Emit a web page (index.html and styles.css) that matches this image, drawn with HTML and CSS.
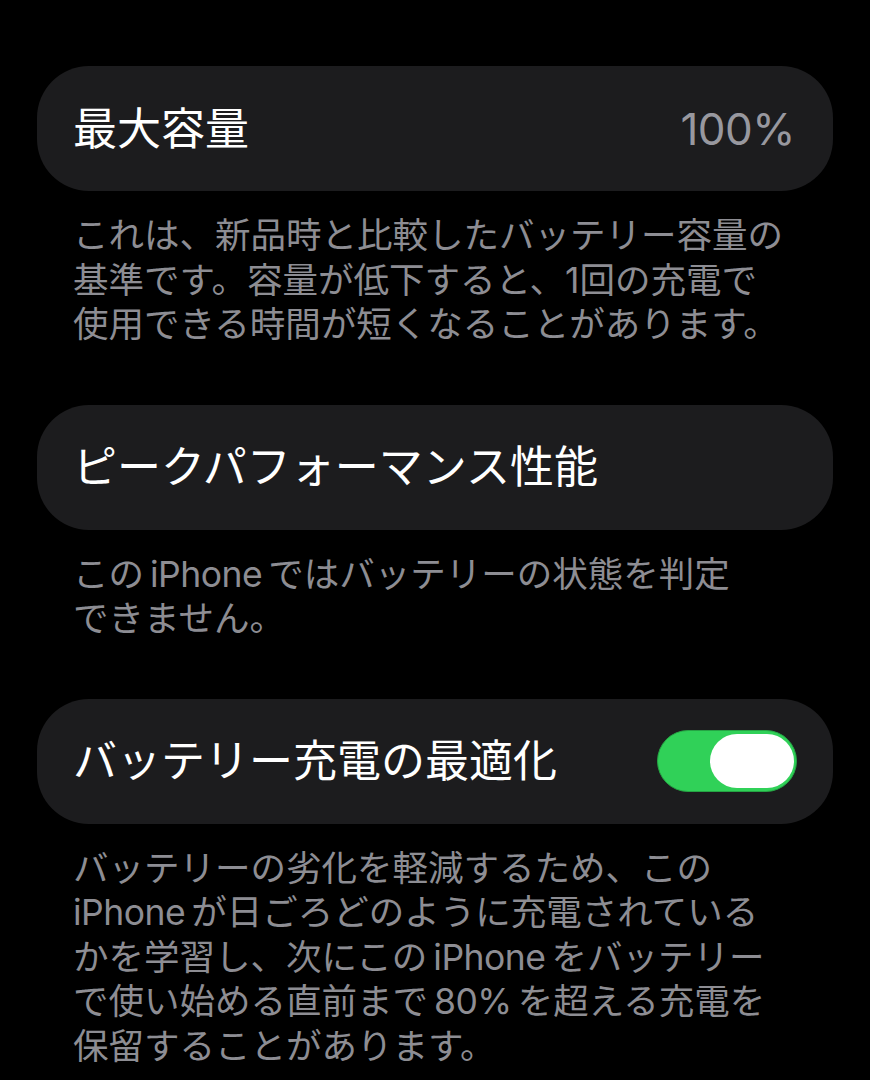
FILE: index.html
```html
<!DOCTYPE html>
<html lang="ja">
<head>
<meta charset="utf-8">
<link rel="stylesheet" href="styles.css">
</head>
<body>
<main class="screen">
  <section class="group">
    <div class="card">
      <span class="title">最大容量</span>
      <span class="value">100%</span>
    </div>
    <p class="desc">これは、新品時と比較したバッテリー容量の<br>基準です。容量が低下すると、1回の充電で<br>使用できる時間が短くなることがあります。</p>
  </section>
  <section class="group">
    <div class="card">
      <span class="title">ピークパフォーマンス性能</span>
    </div>
    <p class="desc">この<span class="lat both">iPhone</span>ではバッテリーの状態を判定<br>できません。</p>
  </section>
  <section class="group">
    <div class="card">
      <span class="title">バッテリー充電の最適化</span>
      <span class="toggle on"><span class="knob"></span></span>
    </div>
    <p class="desc">バッテリーの劣化を軽減するため、この<br><span class="lat right">iPhone</span>が日ごろどのように充電されている<br>かを学習し、次にこの<span class="lat both">iPhone</span>をバッテリー<br>で使い始める直前まで<span class="lat both">80%</span>を超える充電を<br>保留することがあります。</p>
  </section>
</main>
</body>
</html>
```

FILE: styles.css
```css
html, body {
  margin: 0;
  padding: 0;
  background: #000;
}

body {
  width: 870px;
  height: 1080px;
  overflow: hidden;
  font-family: "Inter", "Noto Sans CJK JP", sans-serif;
  color: #fff;
}

.screen {
  padding: 66px 37px 0 37px;
  display: flex;
  flex-direction: column;
  gap: 57px;
}

.group {
  display: flex;
  flex-direction: column;
}

.card {
  height: 125px;
  box-sizing: border-box;
  background: #1c1c1e;
  border-radius: 52px;
  padding: 0 36px 0 36px;
  display: flex;
  align-items: center;
  justify-content: space-between;
}

.title {
  font-size: 44px;
  line-height: 1;
  color: #fff;
  font-weight: 400;
}

.value {
  font-size: 44px;
  line-height: 1;
  color: #98989f;
  font-weight: 400;
  margin-right: 2px;
  letter-spacing: -0.5px;
}

.desc {
  margin: 23px 0 0 0;
  padding: 0 36px;
  font-size: 35.5px;
  line-height: 44.5px;
  color: #8d8d93;
  font-weight: 400;
}

.lat {
  letter-spacing: -0.5px;
}

.lat.both {
  margin: 0 6px;
}

.lat.right {
  margin-right: 6px;
}

.toggle {
  width: 140px;
  height: 62px;
  box-sizing: border-box;
  border-radius: 31px;
  background: #30d158;
  border: 1.5px solid #25a444;
  display: flex;
  align-items: center;
  justify-content: flex-end;
  padding: 0 2px;
}

.knob {
  width: 84px;
  height: 54px;
  border-radius: 27px;
  background: #fff;
}
```
